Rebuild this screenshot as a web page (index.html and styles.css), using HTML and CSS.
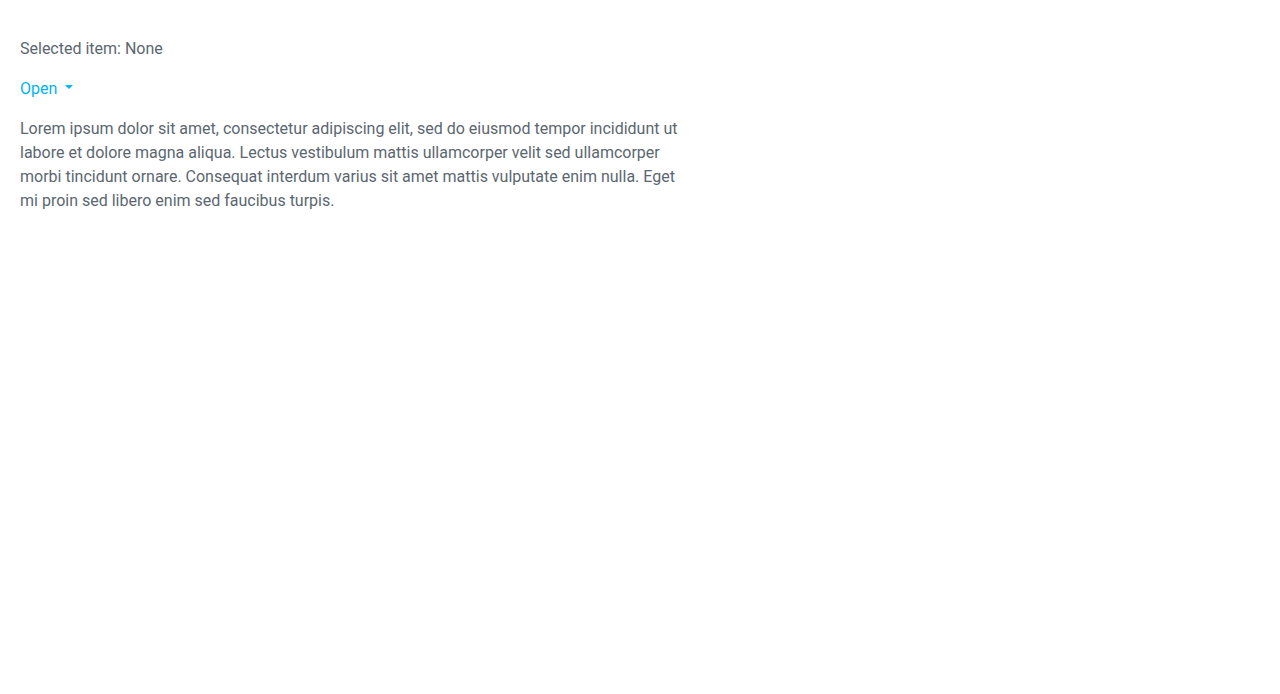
FILE: index.html
```html
<!DOCTYPE html>
<html>
<head>
<meta charset="utf-8">
<link rel="stylesheet" href="styles.css">
</head>
<body>
<div class="page">
  <p class="selected">Selected item: None</p>
  <button class="open-btn" type="button">Open<span class="caret"></span></button>
  <p class="lorem">Lorem ipsum dolor sit amet, consectetur adipiscing elit, sed do eiusmod tempor incididunt ut labore et dolore magna aliqua. Lectus vestibulum mattis ullamcorper velit sed ullamcorper morbi tincidunt ornare. Consequat interdum varius sit amet mattis vulputate enim nulla. Eget mi proin sed libero enim sed faucibus turpis.</p>
</div>
</body>
</html>
```
FILE: styles.css
```css
html, body {
  margin: 0;
  padding: 0;
  background: #fff;
}
.page {
  padding: 21px 20px 20px 20px;
  font-family: Roboto, "Liberation Sans", sans-serif;
  font-size: 16px;
  line-height: 24px;
  color: #5b6770;
  display: flex;
  flex-direction: column;
  align-items: flex-start;
}
.page p {
  margin: 16px 0 0 0;
}
.open-btn {
  margin-top: 16px;
  padding: 0;
  border: 0;
  background: none;
  font: inherit;
  line-height: 24px;
  color: #00b4f0;
  display: inline-flex;
  align-items: center;
  cursor: pointer;
}
.caret {
  display: inline-block;
  width: 0;
  height: 0;
  margin-left: 8px;
  margin-top: -4px;
  border-left: 4px solid transparent;
  border-right: 4px solid transparent;
  border-top: 4px solid currentColor;
}
.lorem {
  width: 670px;
}
```
